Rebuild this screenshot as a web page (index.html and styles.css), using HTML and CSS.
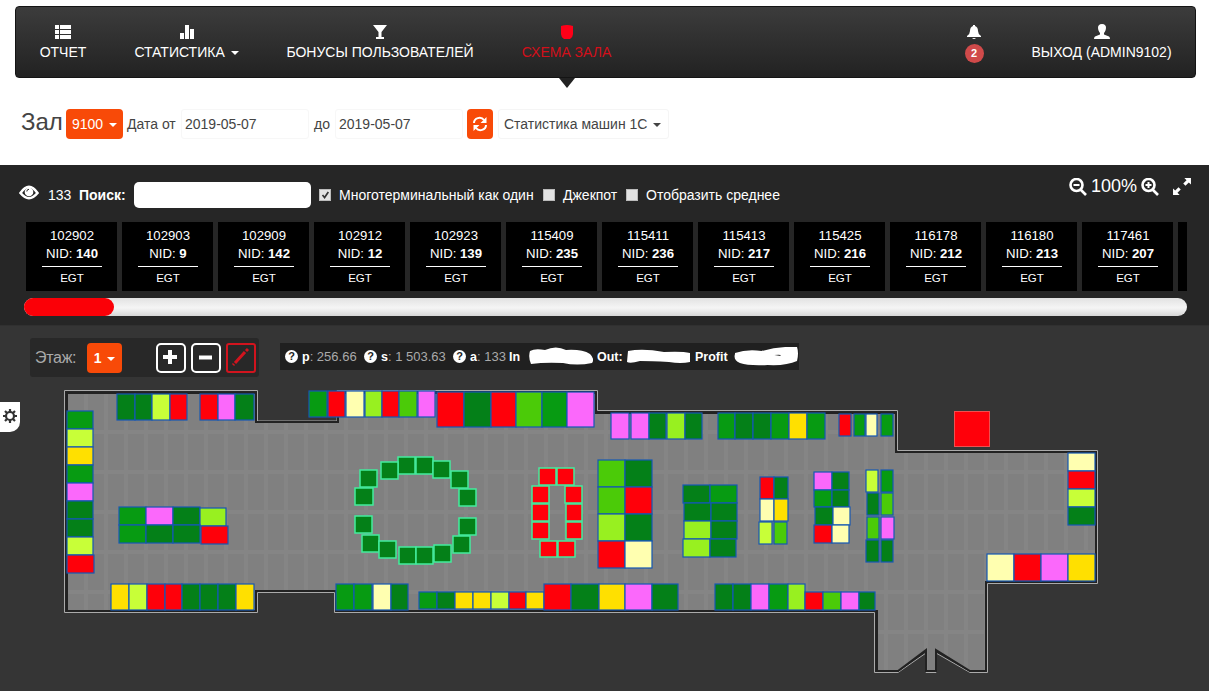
FILE: index.html
```html
<!DOCTYPE html>
<html lang="ru">
<head>
<meta charset="utf-8">
<title>Схема зала</title>
<link rel="stylesheet" href="styles.css">
</head>
<body>
<nav class="nav">
  <a class="nav-item nav-report"><svg class="ico" viewBox="0 0 16 16"><path d="M0 1h4v4H0zM5 1h11v4H5zM0 6h4v4H0zM5 6h11v4H5zM0 11h4v4H0zM5 11h11v4H5z"/></svg><span>ОТЧЕТ</span></a>
  <a class="nav-item nav-stats"><svg class="ico" viewBox="0 0 16 16"><path d="M1 9h4v6H1zM6 1h4v14H6zM11 5h4v10h-4z"/></svg><span>СТАТИСТИКА <i class="caret"></i></span></a>
  <a class="nav-item nav-bonus"><svg class="ico" viewBox="0 0 16 16"><path d="M1 1h14L9.500 8v5H12v2H4v-2h2.500V8z"/></svg><span>БОНУСЫ ПОЛЬЗОВАТЕЛЕЙ</span></a>
  <a class="nav-item nav-map active"><svg class="ico" viewBox="0 0 16 16"><path d="M2 2q6-2 12 0v8q0 3-3 5H5q-3-2-3-5z"/></svg><span>СХЕМА ЗАЛА</span></a>
  <a class="nav-item nav-bell"><svg class="ico" viewBox="0 0 16 16"><path d="M7 1h2v1q3 1 3 5 0 3 3 5v1H1v-1q3-2 3-5 0-4 3-5zM6 14h4q-2 2-4 0z"/></svg><b class="badge">2</b></a>
  <a class="nav-item nav-exit"><svg class="ico" viewBox="0 0 16 16"><path d="M8 0c6 0 4 7 2 9v1.500l5 2Q16 13 16 15H0q0-2 1-2.500l5-2V9C4 7 2 0 8 0z"/></svg><span>ВЫХОД (ADMIN9102)</span></a>
</nav>

<header class="filters">
  <span class="hall">Зал</span>
  <button class="btn hall-btn">9100 <i class="caret"></i></button>
  <span class="from">Дата от</span>
  <span class="date">2019-05-07</span>
  <span class="to">до</span>
  <span class="date">2019-05-07</span>
  <button class="btn refresh"><svg viewBox="0 0 16 16"><path d="M2 7c0-5 7-7 10-3M14 9c0 5-7 7-10 3"/><path class="solid" d="M14.500 1v6h-6zM1.500 15V9h6z"/></svg></button>
  <span class="machine-stats">Статистика машин 1С <i class="caret"></i></span>
</header>

<section class="search-panel">
  <div class="search-row">
    <svg class="eye" viewBox="0 0 20 16"><path d="M1.500 8Q10-4.500 18.500 8 10 18.500 1.500 8z"/><circle cx="10" cy="7" r="4.300"/><path class="thin" d="M7.800 6.500q0-2.200 2.200-2.200"/></svg>
    <span class="count">133</span>
    <b class="label">Поиск:</b>
    <input class="search" type="text">
    <i class="box"><svg viewBox="0 0 12 12"><path d="M3 6l2.500 3L10 2.500"/></svg></i><span class="multi">Многотерминальный как один</span>
    <i class="box"></i><span class="jackpot">Джекпот</span>
    <i class="box"></i><span class="average">Отобразить среднее</span>
    <div class="zoom">
      <svg class="lens" viewBox="0 0 18 18"><circle cx="7.500" cy="7" r="6"/><path d="M11.500 11.500l5.500 5.500"/><path class="sign" d="M4.500 7h6"/></svg>
      <span>100%</span>
      <svg class="lens" viewBox="0 0 18 18"><circle cx="7.500" cy="7" r="6"/><path d="M11.500 11.500l5.500 5.500"/><path class="sign" d="M4.500 7h6M7.500 4v6"/></svg>
      <svg class="expand" viewBox="0 0 19 18"><path d="M12 0h7v7l-2.300-2.300-3.500 3.500-2.400-2.400 3.500-3.500zM0 11l2.300 2.300 3.500-3.500 2.400 2.400-3.500 3.500L7 18H0z"/></svg>
    </div>
  </div>
  <div class="cards">
    <div class="card"><span>102902</span><span>NID: <b>140</b></span><small>EGT</small></div>
    <div class="card"><span>102903</span><span>NID: <b>9</b></span><small>EGT</small></div>
    <div class="card"><span>102909</span><span>NID: <b>142</b></span><small>EGT</small></div>
    <div class="card"><span>102912</span><span>NID: <b>12</b></span><small>EGT</small></div>
    <div class="card"><span>102923</span><span>NID: <b>139</b></span><small>EGT</small></div>
    <div class="card"><span>115409</span><span>NID: <b>235</b></span><small>EGT</small></div>
    <div class="card"><span>115411</span><span>NID: <b>236</b></span><small>EGT</small></div>
    <div class="card"><span>115413</span><span>NID: <b>217</b></span><small>EGT</small></div>
    <div class="card"><span>115425</span><span>NID: <b>216</b></span><small>EGT</small></div>
    <div class="card"><span>116178</span><span>NID: <b>212</b></span><small>EGT</small></div>
    <div class="card"><span>116180</span><span>NID: <b>213</b></span><small>EGT</small></div>
    <div class="card"><span>117461</span><span>NID: <b>207</b></span><small>EGT</small></div>
    <div class="card"></div>
  </div>
  <div class="track"><div class="thumb"></div></div>
</section>

<main class="floor">
  <div class="floor-bar">
    <div class="tools">
      <span class="level">Этаж:</span>
      <button class="btn level-btn">1 <i class="caret"></i></button>
      <svg class="tool first" viewBox="0 0 30 30"><rect x="1" y="1" width="28" height="28" rx="4"/><path d="M7 14h14M14 7v14"/></svg>
      <svg class="tool" viewBox="0 0 30 30"><rect x="1" y="1" width="28" height="28" rx="4"/><path d="M8 14.500h13"/></svg>
      <svg class="tool edit" viewBox="0 0 30 30"><rect x="1" y="1" width="28" height="28" rx="2"/><path d="M9 20L19 9M20 8l2-2M8 21l-1 1"/></svg>
    </div>
    <div class="totals">
      <i class="help">?</i><span class="p"><b>p</b>: 256.66</span>
      <i class="help">?</i><span class="s"><b>s</b>: 1 503.63</span>
      <i class="help">?</i><span class="a"><b>a</b>: 133</span>
      <b class="in">In</b><svg class="mask" viewBox="0 0 64 20" preserveAspectRatio="none"><path d="M1 4Q6 1 16 3q11-5 21 0 16-1 24 4 5 5 2 9-15 3-29 0-18-1-32 1-3-7-1-13z"/></svg>
      <b class="out">Out:</b><svg class="mask" viewBox="0 0 64 20" preserveAspectRatio="none"><path d="M1 4q15-3 36 1 18-1 26 1v9q-9 2-21 0-18-1-29-1-10 3-13 1z"/></svg>
      <b class="profit">Profit</b><svg class="mask last" viewBox="0 0 65 20" preserveAspectRatio="none"><path d="M1 6q12-4 27-2Q46-1 64 0q2 6 0 14-11 5-30 4-19 1-28-2-7-3-5-9z"/><path class="speck" d="M41 8q8-1 6 1z"/></svg>
    </div>
  </div>
  <svg class="map" viewBox="0 378 1209 313">
    <defs>
      <pattern id="tiles" x="125" y="511" width="40" height="40" patternUnits="userSpaceOnUse"><path fill="#858585" d="M0 0h40v40H0z"/><path fill="#808080" d="M3 3h16v36H3zM23 3h16v36H23z"/></pattern>
    </defs>
    <path class="outer" d="M64.500 390.500H257.500V421H337V390.500H597.500V410.500H897.500V450.500H1097.500V583.500H987.500V672.500H970L936 653V672.500H926V653L898 672.500H874.500V612.500H334.500V592.500H257.500V612.500H64.500z"/>
    <path class="floor-area" d="M67 393H256V422H338V393H596V413H896V452H1096V582H986V671H970L936 650V671H926V650L898 671H877V611H337V591H256V611H67z"/>

    <g class="machines">
      <rect class="dg" x="117" y="394" width="18" height="26"/><rect class="dg" x="135" y="394" width="17" height="26"/><rect class="lm" x="152" y="394" width="18" height="26"/><rect class="rd" x="170" y="394" width="17" height="26"/>
      <rect class="rd" x="200" y="394" width="18" height="26"/><rect class="pk" x="218" y="394" width="17" height="26"/><rect class="dg" x="235" y="394" width="19" height="26"/>
      <rect class="mg" x="67" y="411" width="26" height="18"/><rect class="lm" x="67" y="429" width="26" height="18"/><rect class="yl" x="67" y="447" width="26" height="18"/><rect class="mg" x="67" y="465" width="26" height="18"/><rect class="pk" x="67" y="483" width="26" height="18"/><rect class="dg" x="67" y="501" width="26" height="18"/><rect class="dg" x="67" y="519" width="26" height="18"/><rect class="lm" x="67" y="537" width="26" height="18"/><rect class="rd" x="67" y="555" width="27" height="18"/>

      <rect class="mg" x="309" y="391" width="18" height="26"/><rect class="rd" x="328" y="391" width="17" height="26"/><rect class="cr" x="346" y="391" width="18" height="26"/><rect class="lg" x="365" y="391" width="17" height="26"/><rect class="rd" x="382" y="391" width="17" height="26"/><rect class="gr" x="399" y="391" width="18" height="26"/><rect class="pk" x="418" y="391" width="17" height="26"/>
      <rect class="rd" x="437" y="392" width="27" height="35"/><rect class="dg" x="464" y="392" width="27" height="35"/><rect class="rd" x="491" y="392" width="25" height="35"/><rect class="gr" x="516" y="392" width="26" height="35"/><rect class="mg" x="542" y="392" width="25" height="35"/><rect class="pk" x="567" y="392" width="27" height="35"/>
      <rect class="pk" x="611" y="413" width="18" height="26"/><rect class="pk" x="631" y="413" width="18" height="26"/><rect class="dg" x="649" y="413" width="17" height="26"/><rect class="lg" x="667" y="413" width="18" height="26"/><rect class="dg" x="685" y="413" width="17" height="26"/>
      <rect class="mg" x="718" y="413" width="17" height="26"/><rect class="dg" x="735" y="413" width="18" height="26"/><rect class="dg" x="753" y="413" width="18" height="26"/><rect class="mg" x="771" y="413" width="18" height="26"/><rect class="yl" x="789" y="413" width="18" height="26"/><rect class="mg" x="807" y="413" width="18" height="26"/>
      <rect class="rd" x="839" y="414" width="12" height="22"/><rect class="mg" x="854" y="414" width="11" height="22"/><rect class="cr" x="866" y="414" width="11" height="22"/><rect class="mg" x="881" y="414" width="12" height="22"/>
      <rect class="rd alone" x="954.500" y="411.500" width="35" height="35"/>

      <rect class="mg" x="119" y="507" width="27" height="18"/><rect class="pk" x="146" y="507" width="27" height="18"/><rect class="dg" x="173" y="507" width="27" height="18"/><rect class="lg" x="200" y="508" width="26" height="18"/>
      <rect class="mg" x="119" y="525" width="27" height="18"/><rect class="dg" x="146" y="525" width="27" height="18"/><rect class="dg" x="173" y="525" width="27" height="18"/><rect class="rd" x="201" y="526" width="27" height="18"/>
      <rect class="yl" x="111" y="584" width="18" height="26"/><rect class="lm" x="129" y="584" width="18" height="26"/><rect class="rd" x="147" y="584" width="18" height="26"/><rect class="rd" x="165" y="584" width="17" height="26"/><rect class="dg" x="182" y="584" width="18" height="26"/><rect class="dg" x="200" y="584" width="18" height="26"/><rect class="dg" x="218" y="584" width="18" height="26"/><rect class="yl" x="236" y="584" width="18" height="26"/>

      <rect class="gr" x="598" y="460" width="27" height="27"/><rect class="dg" x="625" y="460" width="27" height="27"/><rect class="gr" x="598" y="487" width="27" height="27"/><rect class="rd" x="625" y="487" width="27" height="27"/><rect class="lg" x="598" y="514" width="27" height="27"/><rect class="dg" x="625" y="514" width="27" height="27"/><rect class="rd" x="598" y="541" width="27" height="27"/><rect class="cr" x="625" y="541" width="27" height="27"/>
      <rect class="dg" x="683" y="485" width="27" height="18"/><rect class="mg" x="710" y="485" width="27" height="18"/><rect class="dg" x="684" y="503" width="27" height="18"/><rect class="dg" x="711" y="503" width="26" height="18"/><rect class="lg" x="684" y="521" width="27" height="18"/><rect class="dg" x="711" y="521" width="26" height="18"/><rect class="lg" x="683" y="539" width="27" height="18"/><rect class="dg" x="710" y="539" width="26" height="18"/>
      <rect class="rd" x="760" y="477" width="14" height="22"/><rect class="dg" x="774" y="477" width="14" height="22"/><rect class="cr" x="760" y="499" width="14" height="22"/><rect class="yl" x="774" y="499" width="14" height="22"/><rect class="lm" x="759" y="522" width="13" height="22"/><rect class="gr" x="774" y="522" width="13" height="22"/>
      <rect class="pk" x="814" y="472" width="18" height="18"/><rect class="dg" x="832" y="472" width="17" height="18"/><rect class="mg" x="814" y="490" width="18" height="17"/><rect class="dg" x="832" y="490" width="17" height="17"/><rect class="dg" x="815" y="507" width="18" height="18"/><rect class="cr" x="833" y="507" width="17" height="18"/><rect class="rd" x="814" y="525" width="18" height="18"/><rect class="cr" x="832" y="525" width="17" height="18"/>
      <rect class="lm" x="866" y="470" width="12" height="22"/><rect class="mg" x="881" y="470" width="12" height="22"/><rect class="dg" x="867" y="493" width="12" height="22"/><rect class="gr" x="881" y="493" width="12" height="22"/><rect class="gr" x="867" y="517" width="12" height="22"/><rect class="pk" x="881" y="517" width="13" height="22"/><rect class="dg" x="866" y="540" width="13" height="22"/><rect class="dg" x="881" y="540" width="12" height="22"/>

      <rect class="mg" x="336" y="584" width="18" height="26"/><rect class="mg" x="354" y="584" width="18" height="26"/><rect class="cr" x="373" y="584" width="18" height="26"/><rect class="dg" x="391" y="584" width="17" height="26"/>
      <rect class="mg" x="419" y="592" width="18" height="17"/><rect class="dg" x="437" y="592" width="18" height="17"/><rect class="yl" x="455" y="592" width="18" height="17"/><rect class="yl" x="473" y="592" width="18" height="17"/><rect class="lm" x="491" y="592" width="18" height="17"/><rect class="rd" x="509" y="592" width="17" height="17"/><rect class="yl" x="526" y="592" width="18" height="17"/>
      <rect class="rd" x="544" y="584" width="27" height="26"/><rect class="dg" x="571" y="584" width="28" height="26"/><rect class="yl" x="599" y="584" width="26" height="26"/><rect class="pk" x="625" y="584" width="27" height="26"/><rect class="dg" x="652" y="584" width="26" height="26"/>
      <rect class="dg" x="715" y="584" width="18" height="26"/><rect class="dg" x="733" y="584" width="18" height="26"/><rect class="pk" x="751" y="584" width="18" height="26"/><rect class="mg" x="769" y="584" width="19" height="26"/><rect class="lg" x="788" y="584" width="17" height="26"/><rect class="rd" x="805" y="592" width="18" height="18"/><rect class="gr" x="823" y="592" width="18" height="18"/><rect class="pk" x="841" y="592" width="18" height="18"/><rect class="dg" x="859" y="592" width="16" height="18"/>

      <rect class="cr" x="1068" y="453" width="27" height="18"/><rect class="rd" x="1068" y="471" width="27" height="18"/><rect class="lm" x="1068" y="489" width="27" height="18"/><rect class="dg" x="1068" y="507" width="27" height="18"/>
      <rect class="cr" x="987" y="554" width="27" height="27"/><rect class="rd" x="1014" y="554" width="27" height="27"/><rect class="pk" x="1041" y="554" width="27" height="27"/><rect class="yl" x="1068" y="554" width="27" height="27"/>
    </g>
    <g class="terminals">
      <rect class="dg" x="398" y="457" width="17" height="17"/><rect class="dg" x="416" y="457" width="17" height="17"/><rect class="dg" x="381" y="462" width="17" height="17"/><rect class="dg" x="433" y="461" width="17" height="17"/><rect class="dg" x="360" y="470" width="17" height="17"/><rect class="dg" x="451" y="471" width="17" height="17"/><rect class="dg" x="355" y="488" width="18" height="17"/><rect class="dg" x="459" y="489" width="17" height="17"/>
      <rect class="dg" x="355" y="516" width="17" height="17"/><rect class="dg" x="459" y="518" width="17" height="17"/><rect class="dg" x="362" y="535" width="17" height="17"/><rect class="dg" x="453" y="536" width="17" height="17"/><rect class="dg" x="379" y="541" width="17" height="17"/><rect class="dg" x="434" y="545" width="17" height="17"/><rect class="dg" x="399" y="547" width="17" height="17"/><rect class="dg" x="416" y="547" width="17" height="17"/>
      <rect class="rd" x="539" y="468" width="17" height="17"/><rect class="rd" x="557" y="468" width="17" height="17"/><rect class="rd" x="532" y="486" width="17" height="17"/><rect class="rd" x="565" y="486" width="17" height="17"/><rect class="rd" x="532" y="504" width="17" height="17"/><rect class="rd" x="566" y="504" width="16" height="17"/><rect class="rd" x="532" y="522" width="17" height="17"/><rect class="rd" x="566" y="522" width="16" height="17"/><rect class="rd" x="540" y="541" width="17" height="16"/><rect class="rd" x="558" y="541" width="17" height="16"/>
    </g>
  </svg>
</main>
<div class="settings"><svg viewBox="0 0 16 16"><circle cx="8" cy="8" r="4"/><path d="M8 1v3M8 12v3M1 8h3M12 8h3M3 3l2 2M11 11l2 2M3 13l2-2M11 5l2-2"/></svg></div>
</body>
</html>
```
FILE: styles.css
```css
* { box-sizing: border-box; }
body { margin: 0; width: 1209px; height: 691px; overflow: hidden; background: #fff; font: 14px "Liberation Sans", Arial, sans-serif; color: #444; }
span, b { white-space: nowrap; }
.caret { display: inline-block; border: 4px solid transparent; border-top-color: currentColor; border-bottom: 0; vertical-align: middle; margin-left: 2px; }

.nav { display: flex; height: 72px; margin: 6px 13px 0 15px; background: linear-gradient(#3c3c3c, #222); border: 1px solid #141414; border-radius: 4px; color: #fff; }
.nav-item { position: relative; display: flex; flex-direction: column; align-items: center; padding: 17px 0 0; flex: none; }
.nav-item span { line-height: 16px; margin-top: 4px; }
.ico { width: 16px; height: 16px; fill: currentColor; }
.nav-report { width: 94px; }
.nav-stats { width: 153px; }
.nav-bonus { width: 234px; }
.nav-map { width: 139px; }
.nav-bell { width: 68px; margin-left: auto; }
.nav-exit { width: 187px; }
.active { color: #d20f1a; }
.active .ico { fill: #ff0018; }
.active::after { content: ""; position: absolute; top: 71px; border: 8px solid transparent; border-top: 10px solid #222; border-bottom: 0; }
.badge { width: 19px; height: 19px; margin-top: 4px; border-radius: 10px; background: #d04a4a; font-size: 11px; line-height: 19px; text-align: center; }

.btn { border: 0; border-radius: 4px; padding: 0; background: #f84a08; color: #fff; font: bold 14px "Liberation Sans", Arial, sans-serif; flex: none; }
.filters { display: flex; align-items: center; height: 87px; padding: 5px 0 0 21px; }
.filters > * { flex: none; }
.hall { width: 45px; font-size: 24px; margin-top: -5px; }
.hall-btn { width: 57px; height: 30px; font: 14px "Liberation Sans", Arial, sans-serif; }
.from { width: 54px; margin-left: 4px; }
.date { width: 128px; height: 30px; padding-left: 3px; border: 1px solid #f7f7f7; border-radius: 3px; line-height: 28px; }
.to { width: 21px; margin-left: 5px; }
.refresh { width: 26px; height: 30px; margin-left: 4px; display: grid; place-items: center; }
.refresh svg { width: 16px; height: 16px; fill: none; stroke: #fff; stroke-width: 2; }
.refresh .solid { fill: #fff; stroke: none; }
.machine-stats { width: 171px; height: 30px; margin-left: 5px; padding-left: 5px; border: 1px solid #f5f5f5; border-radius: 3px; line-height: 28px; }

.search-panel { height: 161px; padding: 17px 22px 0 24px; background: #262626; border-bottom: 1px solid #303030; color: #fff; }
.search-row { display: flex; align-items: center; height: 26px; margin-left: -5px; }
.search-row > * { flex: none; }
.eye { width: 20px; height: 16px; margin-top: -5px; fill: none; stroke: #fff; stroke-width: 2.600; }
.eye circle { fill: #fff; stroke: none; }
.eye .thin { stroke: #262626; stroke-width: 1; }
.count { width: 31px; margin-left: 9px; }
.label { width: 55px; }
.search { width: 177px; height: 26px; border: 0; border-radius: 5px; background: #fff; margin: 0 8px 0 0; padding: 0 6px; }
.box { width: 12px; height: 12px; margin-right: 8px; border: 1px solid #bbb; background: #e3e3e3; }
.box svg { display: block; width: 10px; height: 10px; fill: none; stroke: #333; stroke-width: 2; }
.multi { width: 204px; }
.jackpot { width: 63px; }
.zoom { display: flex; align-items: center; margin: -17px 0 0 auto; position: relative; right: -6px; width: 124px; font-size: 18px; }
.lens { width: 18px; height: 18px; fill: none; stroke: #fff; stroke-width: 2.600; }
.lens .sign { stroke-width: 2; }
.zoom span { width: 50px; padding-left: 4px; margin-right: 4px; }
.zoom .expand { width: 18px; height: 17px; margin-left: 14px; fill: #fff; }

.cards { display: flex; gap: 5px; width: 1163px; height: 69px; margin-top: 14px; padding-left: 2px; overflow: hidden; }
.card { flex: none; width: 91px; padding: 5px 0 0 1px; background: #000; display: flex; flex-direction: column; align-items: center; font-size: 13.200px; line-height: 18px; }
.card small { width: 60px; margin-top: 3px; border-top: 1px solid #fff; font-size: 11.500px; line-height: 23px; text-align: center; }
.track { width: 1163px; height: 18px; margin-top: 7px; border-radius: 9px; background: linear-gradient(#e2e2e2, #f5f5f5 55%, #d5d5d5); }
.thumb { width: 90px; height: 18px; border-radius: 9px; background: #fb0007; }

.floor { background: #353535; height: 365px; }
.floor-bar { display: flex; height: 52px; padding: 12px 0 0 30px; }
.tools { display: flex; align-items: center; width: 229px; height: 39px; padding-left: 5px; background: #282828; border-radius: 3px; }
.level { width: 52px; font-size: 16px; letter-spacing: -0.300px; color: #aaa; }
.level-btn { width: 35px; height: 30px; }
.tool { width: 30px; height: 30px; margin-left: 5px; fill: none; stroke: #fff; stroke-width: 2; }
.tool.first { margin-left: 34px; }
.tool path { stroke-width: 4; }
.edit { stroke: #d2141e; }
.edit path { stroke-width: 3; }
.totals { display: flex; align-items: center; width: 519px; height: 27px; margin: 5px 0 0 21px; padding-left: 5px; background: #202020; color: #aaa; font-size: 13px; }
.totals > * { flex: none; }
.totals b { color: #fff; font-size: 12.500px; }
.help { width: 13px; height: 13px; margin-right: 4px; border-radius: 7px; background: #fff; color: #222; font: bold 11px/13px "Liberation Sans", sans-serif; text-align: center; }
.p { width: 62px; }
.s { width: 72px; }
.a { width: 39px; }
.in { width: 20px; }
.out { width: 30px; margin-left: 4px; }
.profit { width: 39px; margin-left: 4px; }
.mask { width: 64px; height: 20px; fill: #fff; }
.mask .speck { fill: #333; }
.map { display: block; width: 1209px; height: 313px; }
.outer { fill: #252525; stroke: #aaa; stroke-width: 1; }
.floor-area { fill: url(#tiles); stroke: #222; stroke-width: 2; }
.machines rect { stroke: #1458b4; stroke-width: 1.200; }
.machines .alone { stroke: #ef5050; stroke-width: 1; }
.terminals rect { stroke: #43ec9d; stroke-width: 1.500; }
.map .dg { fill: #048018; }
.map .mg { fill: #079b12; }
.map .gr { fill: #4bcb08; }
.map .lg { fill: #98f020; }
.map .lm { fill: #c8ff38; }
.map .yl { fill: #ffe000; }
.map .cr { fill: #ffffb0; }
.map .rd { fill: #ff000a; }
.map .pk { fill: #fb68fb; }
.settings { position: absolute; left: 0; top: 402px; width: 20px; height: 30px; padding: 6px 0 0 2px; border-radius: 0 0 10px 0; background: #fff; }
.settings svg { width: 16px; height: 16px; fill: none; stroke: #333; stroke-width: 2.200; }
```
